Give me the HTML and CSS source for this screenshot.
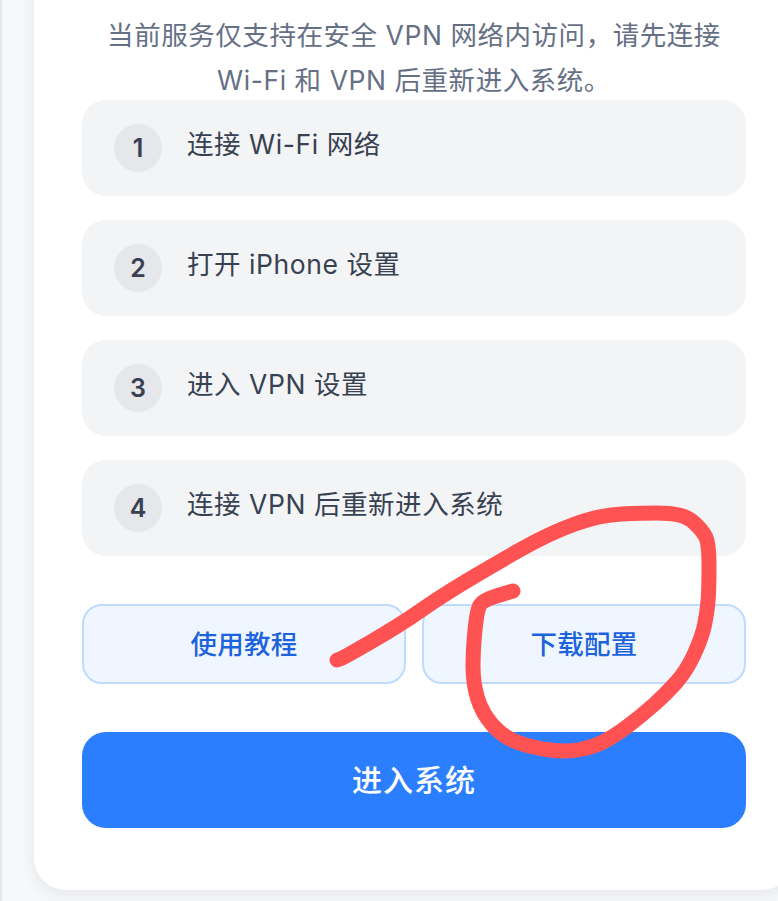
FILE: index.html
```html
<!DOCTYPE html>
<html lang="zh-CN">
<head>
    <meta charset="UTF-8" />
    <meta name="viewport" content="width=device-width, initial-scale=1.0" />
    <title>VPN 访问提示</title>
    <link rel="stylesheet" href="styles.css">
</head>
<body>
    <div class="page">
        <main class="card">
            <p class="notice">当前服务仅支持在安全 VPN 网络内访问，请先连接<br>Wi-Fi 和 VPN 后重新进入系统。</p>
            <ol class="steps">
                <li class="step"><span class="step-num">1</span><span class="step-text">连接 Wi-Fi 网络</span></li>
                <li class="step"><span class="step-num">2</span><span class="step-text">打开 iPhone 设置</span></li>
                <li class="step"><span class="step-num">3</span><span class="step-text">进入 VPN 设置</span></li>
                <li class="step"><span class="step-num">4</span><span class="step-text">连接 VPN 后重新进入系统</span></li>
            </ol>
            <div class="actions">
                <button class="btn-light" type="button">使用教程</button>
                <button class="btn-light" type="button">下载配置</button>
            </div>
            <button class="btn-primary" type="button">进入系统</button>
        </main>
    </div>

    <!-- hand-drawn markup on top of the screenshot -->
    <svg class="scribble" width="778" height="901" viewBox="0 0 778 901" aria-hidden="true">
        <path d="M337 660 L340 659 Q343 658 371.5 641.5 Q400 625 420 611 Q440 597 466.5 581 Q493 565 521.5 549 Q550 533 575 524 Q600 515 621.5 514 Q643 513 656.5 513 Q670 513 679 515 Q688 517 695 523.5 Q702 530 705.5 536.5 Q709 543 709 566.5 Q709 590 708 601.5 Q707 613 704.5 625 Q702 637 694.5 653.5 Q687 670 677 681.5 Q667 693 653.5 705 Q640 717 626.5 727 Q613 737 603 742 Q593 747 580 749.5 Q567 752 550 750 Q533 748 518 742.5 Q503 737 492.5 725 Q482 713 477.5 698 Q473 683 473 666.5 Q473 650 475 630 Q477 610 480 605 Q483 600 498 595.5 L513 591" />
    </svg>
</body>
</html>
```

FILE: styles.css
```css
html,
body {
    margin: 0;
    padding: 0;
    height: 100%;
}
body {
    font-family: Inter, "Noto Sans CJK SC", sans-serif;
    background: #f7f8fa;
    overflow: hidden;
    position: relative;
}
.page {
    height: 901px;
    border-left: 2px solid #e5e7eb;
    box-sizing: border-box;
    padding-left: 32px;
    overflow: hidden;
}
.card {
    width: 760px;
    height: 930px;
    margin-top: -40px;
    box-sizing: border-box;
    padding: 53px 48px 0;
    background: #fff;
    border-radius: 32px;
    box-shadow: 0 4px 16px rgba(17, 24, 39, 0.08);
}
.notice {
    margin: 0;
    width: 664px;
    height: 87px;
    font-size: 26.5px;
    letter-spacing: 0.55px;
    line-height: 45px;
    text-align: center;
    white-space: nowrap;
    color: #667085;
}
.steps {
    list-style: none;
    margin: 0;
    padding: 0;
    display: flex;
    flex-direction: column;
    gap: 24px;
    width: 664px;
}
.step {
    height: 96px;
    box-sizing: border-box;
    padding: 0 32px;
    display: flex;
    align-items: center;
    gap: 25px;
    background: #f3f4f6;
    border-radius: 24px;
}
.step-num {
    width: 48px;
    height: 48px;
    flex: none;
    display: flex;
    align-items: center;
    justify-content: center;
    border-radius: 50%;
    background: #e5e7eb;
    color: #374151;
    font-size: 25px;
    font-weight: 600;
}
.step-text {
    font-size: 26.5px;
    letter-spacing: 0.55px;
    color: #374151;
    margin-bottom: 11px;
}
.actions {
    display: flex;
    gap: 16px;
    width: 664px;
    margin-top: 48px;
}
.btn-light {
    flex: 1;
    height: 80px;
    padding-bottom: 4px;
    font-family: inherit;
    font-size: 26.5px;
    letter-spacing: 0.3px;
    font-weight: 500;
    color: #1d63dd;
    background: #eff6ff;
    border: 2px solid #bedbff;
    border-radius: 20px;
}
.btn-primary {
    display: block;
    width: 664px;
    height: 96px;
    margin-top: 48px;
    padding-bottom: 6px;
    font-family: inherit;
    font-size: 30px;
    letter-spacing: 1px;
    font-weight: 500;
    color: #fff;
    background: #2b7fff;
    border: none;
    border-radius: 24px;
}
.scribble {
    position: absolute;
    top: 0;
    left: 0;
    pointer-events: none;
}
.scribble path {
    fill: none;
    stroke: #ff5252;
    stroke-width: 15;
    stroke-linecap: round;
    stroke-linejoin: round;
}
```
